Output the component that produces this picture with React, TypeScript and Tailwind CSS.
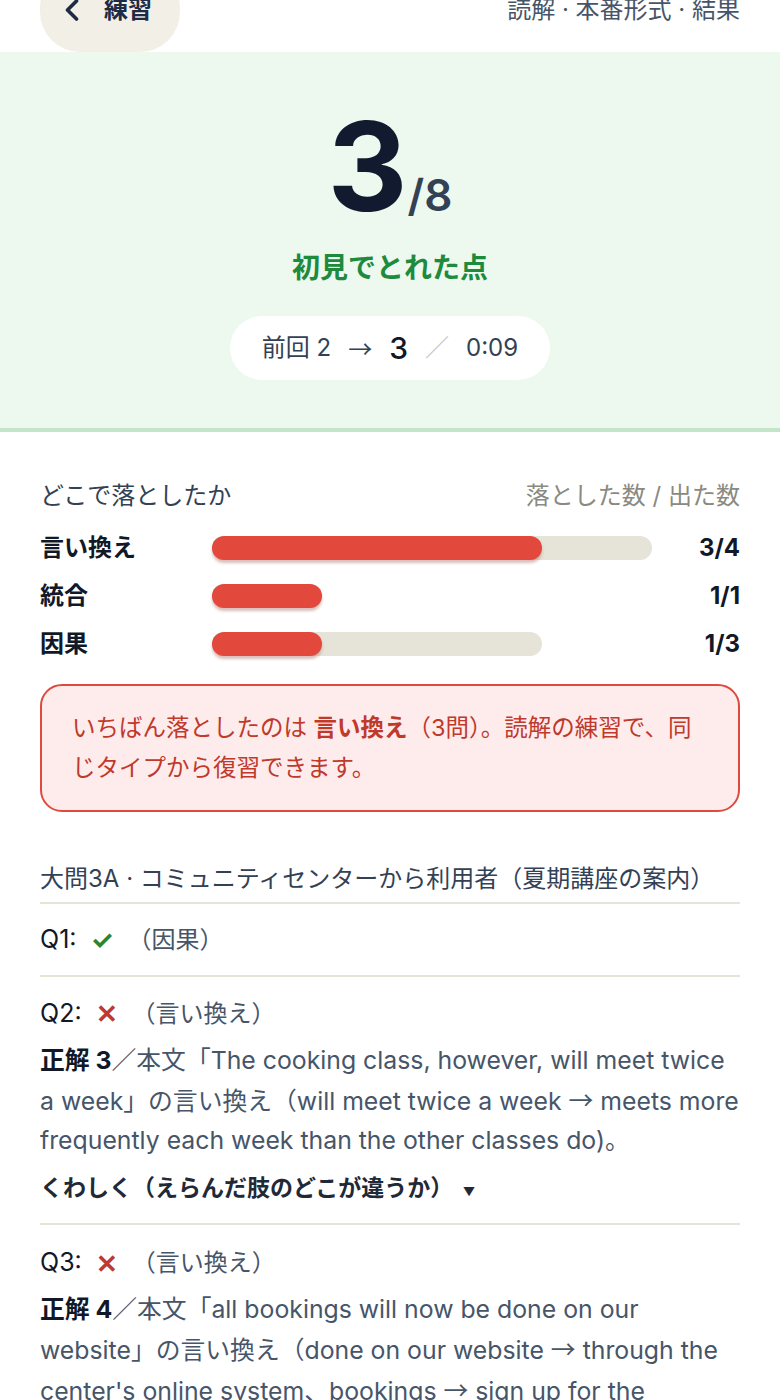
import { ChevronLeft } from "lucide-react";

const FONT = "font-['Inter','Noto_Sans_CJK_JP',sans-serif]";

interface Stat {
  label: string;
  missed: number;
  total: number;
}

const STATS: Stat[] = [
  { label: "言い換え", missed: 3, total: 4 },
  { label: "統合", missed: 1, total: 1 },
  { label: "因果", missed: 1, total: 3 },
];

const UNIT = 110;

function StatRow({ s }: { s: Stat }) {
  return (
    <div className="grid h-12 grid-cols-[172px_1fr_auto] items-center">
      <span className="text-[24px] font-bold text-[#111827]">{s.label}</span>
      <div className="h-6 rounded-full bg-[#e6e3d8]" style={{ width: s.total * UNIT }}>
        <div className="h-6 rounded-full bg-[#e2483c] shadow-[0_3px_3px_rgba(150,70,60,0.35)]" style={{ width: s.missed * UNIT }} />
      </div>
      <span className="text-[24px] font-bold text-[#111827]">{s.missed}/{s.total}</span>
    </div>
  );
}

function Mark({ ok }: { ok: boolean }) {
  return ok ? <span className="text-[26px] font-bold text-[#1f8a3a]">✓</span> : <span className="text-[26px] font-bold text-[#c0392b]">✕</span>;
}

const Arrow = () => <span className="font-['Noto_Sans_CJK_JP',sans-serif]">→</span>;

function QHead({ n, ok, tag }: { n: number; ok: boolean; tag: string }) {
  return (
    <div className="flex items-center gap-[14px]">
      <span className="text-[25px] text-[#111827]">Q{n}:</span>
      <Mark ok={ok} />
      <span className="text-[24px] text-[#475569]">（{tag}）</span>
    </div>
  );
}

export default function App() {
  return (
    <div className={`min-h-[1400px] overflow-hidden bg-white ${FONT}`}>
      {/* header */}
      <div className="flex h-[52px] items-start justify-between px-10">
        <button className="-mt-[32px] flex h-[84px] w-[140px] items-center gap-[14px] rounded-[40px] bg-[#f2efe7] pl-[14px] text-[#1f2a44]">
          <ChevronLeft size={36} strokeWidth={2.4} />
          <span className="text-[24px] font-bold">練習</span>
        </button>
        <span className="-mt-[8px] text-[24px] text-[#475569]">読解 · 本番形式 · 結果</span>
      </div>

      {/* score */}
      <div className="flex h-[380px] flex-col items-center border-b-4 border-[#c3e6ca] bg-[#edf8ef] pt-[52px]">
        <div className="flex items-baseline">
          <span className="text-[124px] font-bold leading-none text-[#111a2e]">3</span>
          <span className="text-[44px] font-semibold leading-none text-[#334155]">/8</span>
        </div>
        <p className="mt-[19px] text-[28px] font-bold text-[#1e8a3c]">初見でとれた点</p>
        <div className="mt-[27px] flex h-16 items-center gap-[17px] rounded-full bg-white px-8 text-[24px] text-[#334155]">
          <span>前回 2</span>
          <Arrow />
          <span className="text-[30px] font-medium text-[#111827]">3</span>
          <span className="text-[#c4c4c4]">／</span>
          <span>0:09</span>
        </div>
      </div>

      <div className="px-10">
        {/* stats */}
        <div className="mt-[46px] flex items-center justify-between text-[24px]">
          <span className="text-[#334155]">どこで落としたか</span>
          <span className="text-[#8a8a80]">落とした数 / 出た数</span>
        </div>
        <div className="mt-[10px]">
          {STATS.map((s) => (
            <StatRow key={s.label} s={s} />
          ))}
        </div>

        <div className="mt-4 rounded-[22px] border-2 border-[#dc4b3e] bg-[#fdeceb] px-[30px] py-[22px] text-[23.5px] leading-10 text-[#c0392b]">
          いちばん落としたのは <b>言い換え</b>（3問）。読解の練習で、同じタイプから復習できます。
        </div>

        {/* questions */}
        <div className="mt-[49px] border-b-2 border-[#e6e3d7] pb-[5px] text-[24px] text-[#334155]">
          大問3A · コミュニティセンターから利用者（夏期講座の案内）
        </div>

        <div className="border-b-2 border-[#e6e3d7] py-4">
          <QHead n={1} ok tag="因果" />
        </div>

        <div className="border-b-2 border-[#e6e3d7] pb-[17px] pt-[17px]">
          <QHead n={2} ok={false} tag="言い換え" />
          <p className="mt-[8px] text-[24.8px] leading-[39px] text-[#475569]">
            <b className="text-[#111827]">正解 3</b>／本文「The cooking class, however, will meet twice a week」の言い換え（will meet twice a week <Arrow /> meets more frequently each week than the other classes do)。
          </p>
          <p className="mt-[11px] text-[23px] font-bold text-[#1f2937]">
            くわしく（えらんだ肢のどこが違うか） <span className="ml-1 text-[12px]">▼</span>
          </p>
        </div>

        <div className="pt-[19px]">
          <QHead n={3} ok={false} tag="言い換え" />
          <p className="mt-[7px] text-[24.8px] leading-[39px] text-[#475569]">
            <b className="text-[#111827]">正解 4</b>／本文「all bookings will now be done on our website」の言い換え（done on our website <Arrow /> through the center's online system、bookings <Arrow /> sign up for the classes）。
          </p>
        </div>
      </div>
    </div>
  );
}
